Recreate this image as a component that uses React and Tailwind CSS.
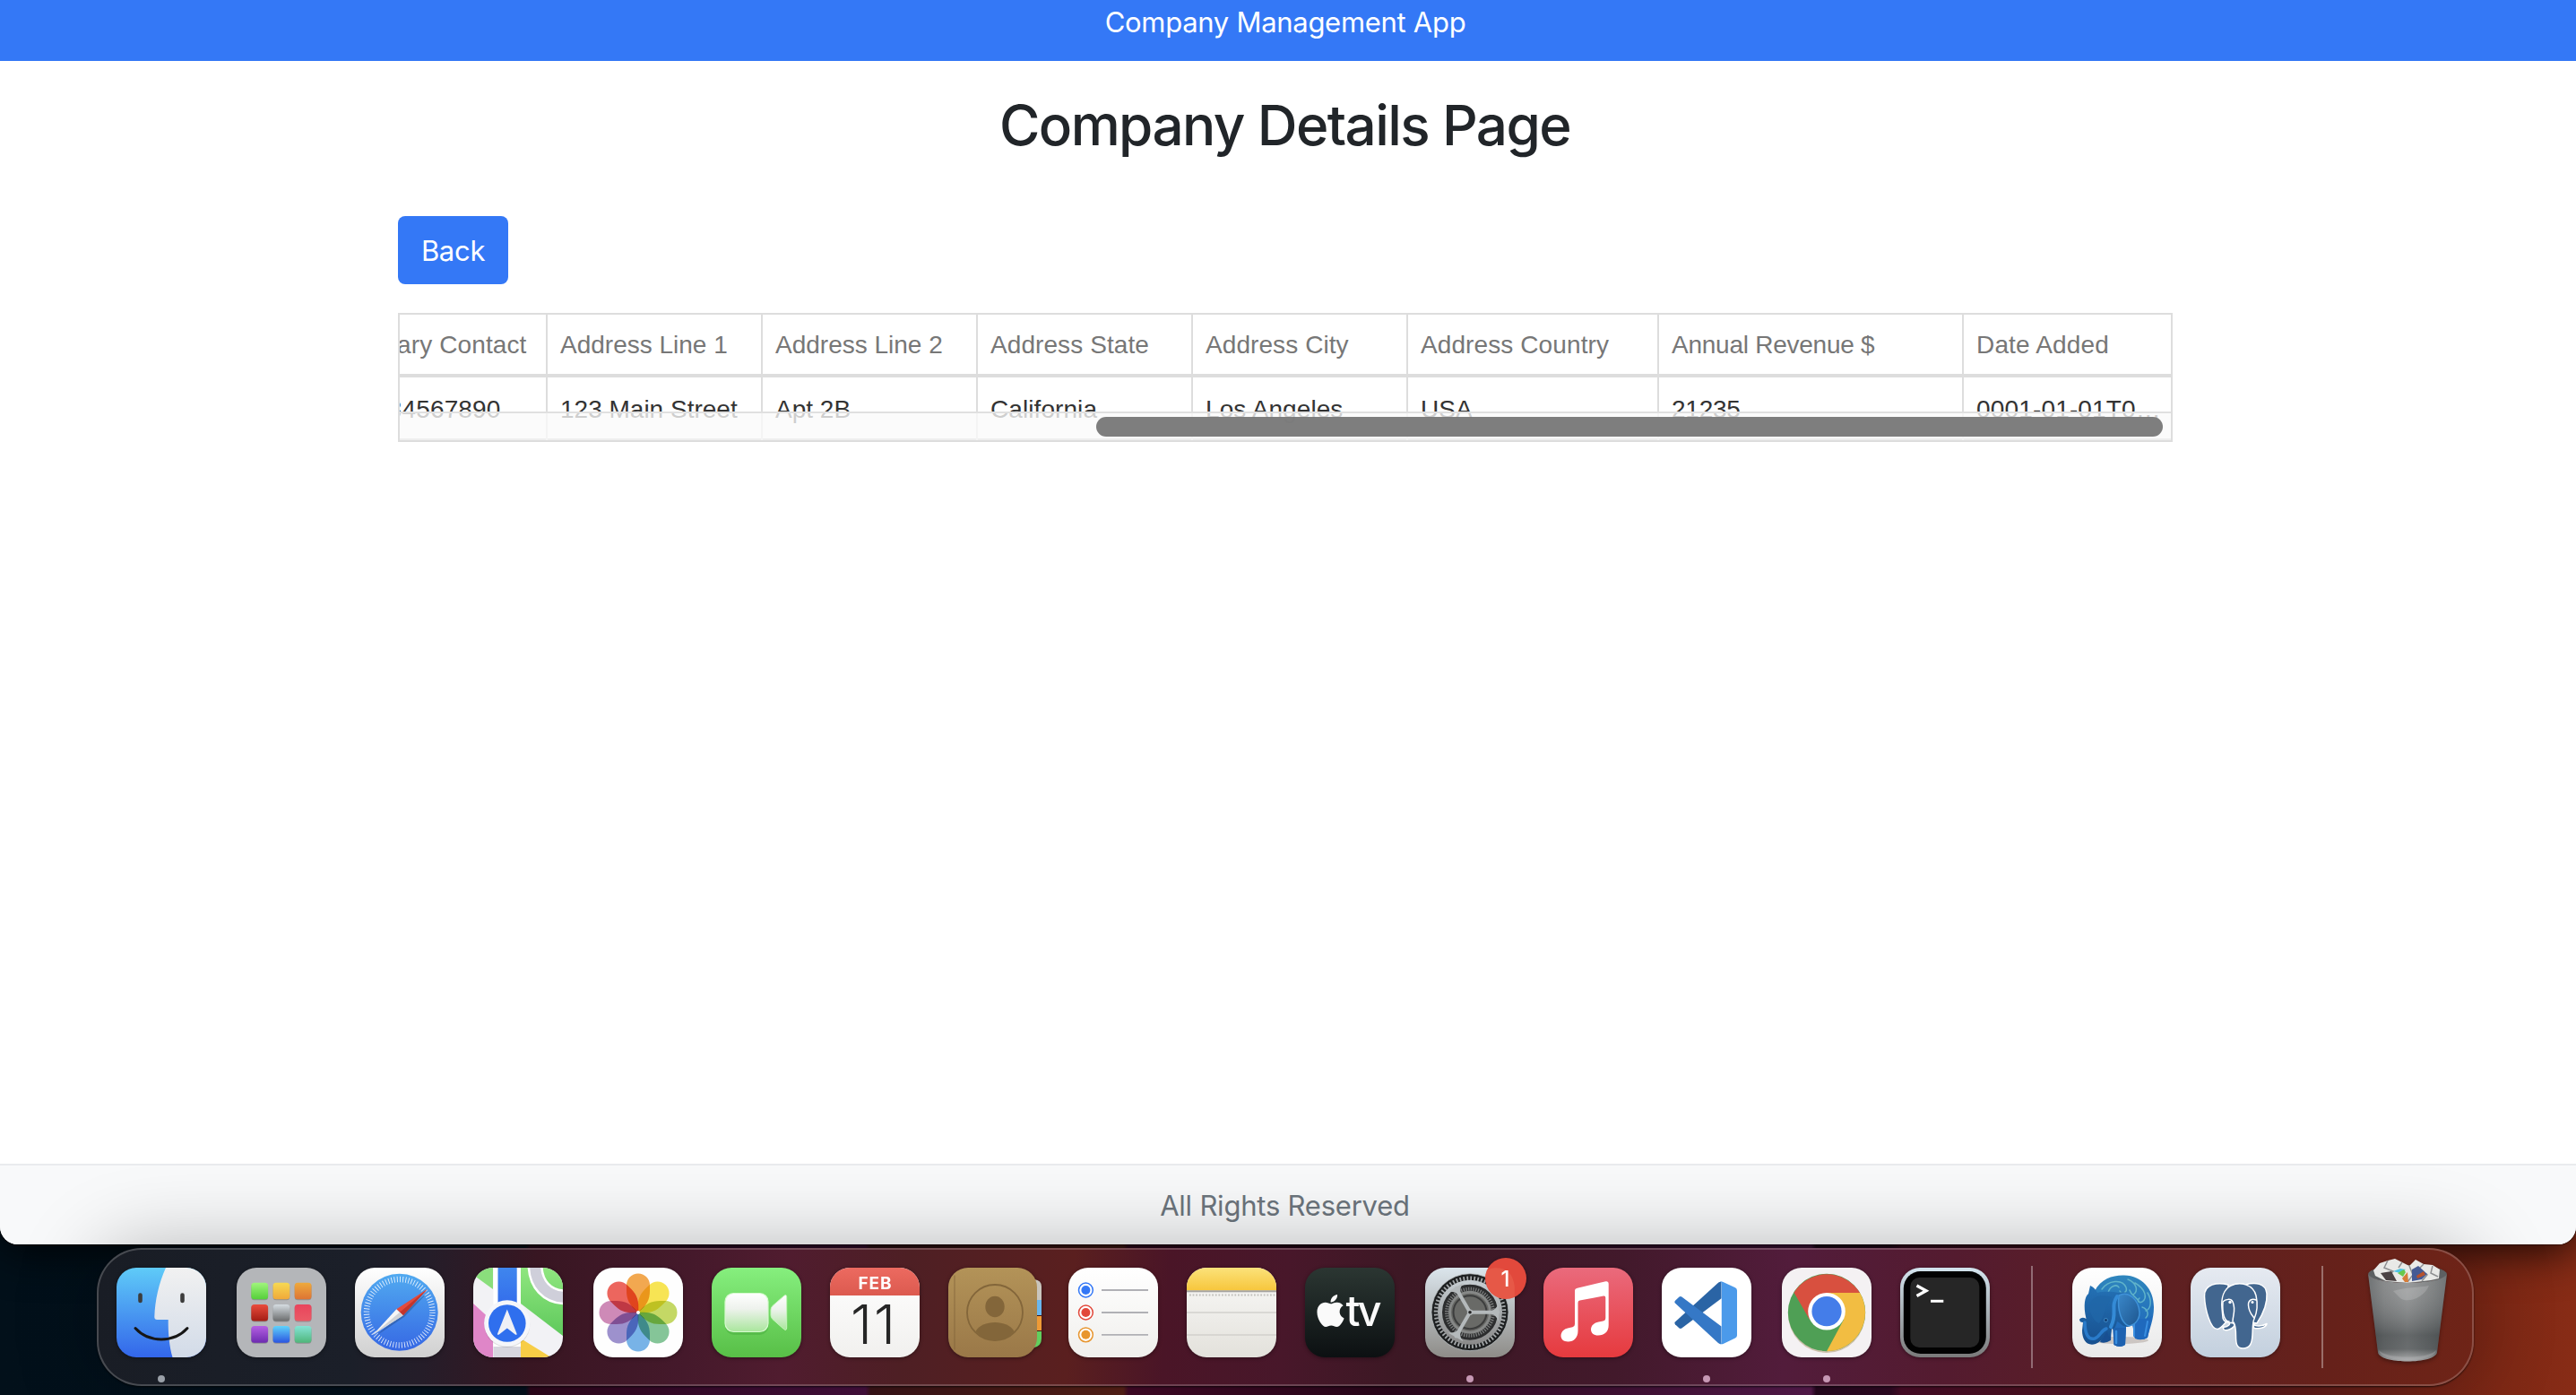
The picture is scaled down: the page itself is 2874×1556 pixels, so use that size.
import React from "react";
import { FaApple } from "react-icons/fa";

const columns = [
  { title: "Primary Contact", value: "+1234567890", width: "w-[240px]", spacing: "tracking-[0.12px]" },
  { title: "Address Line 1", value: "123 Main Street", width: "w-[240px]" },
  { title: "Address Line 2", value: "Apt 2B", width: "w-[240px]" },
  { title: "Address State", value: "California", width: "w-[240px]", spacing: "tracking-[0.08px]" },
  { title: "Address City", value: "Los Angeles", width: "w-[240px]", spacing: "tracking-[0.08px]" },
  { title: "Address Country", value: "USA", width: "w-[280px]", spacing: "tracking-[0.1px]" },
  { title: "Annual Revenue $", value: "21235", width: "w-[340px]", spacing: "tracking-[-0.25px]" },
  { title: "Date Added", value: "0001-01-01T0…", width: "w-[231px]", spacing: "tracking-[0.16px]", last: true },
];

function Cell({ col, children, className }) {
  return (
    <div
      className={`${col.width} shrink-0 whitespace-nowrap border-[#dddddd] pl-3.5 ${col.last ? "" : "border-r-2"} ${col.spacing ?? ""} ${className}`}
    >
      {children}
    </div>
  );
}

function DataTable() {
  return (
    <div className="relative mt-8 h-36 w-[1980px] overflow-hidden border-2 border-[#dddddd] font-['Liberation_Sans',sans-serif] text-[28px]">
      <div className="-ml-[75px] flex h-[70px] border-b-4 border-[#dddddd] text-[#777777]">
        {columns.map((c) => (
          <Cell key={c.title} col={c} className="leading-[68px]">{c.title}</Cell>
        ))}
      </div>
      <div className="-ml-[75px] flex h-[70px] text-[#333333]">
        {columns.map((c) => (
          <Cell key={c.title} col={c} className="leading-[71px] shadow-[inset_0_-2px_0_#c4c4c4]">{c.value}</Cell>
        ))}
      </div>
      <div className="absolute inset-x-0 bottom-0 h-8 border-t-2 border-[#e0e0e0] bg-[rgba(250,250,250,0.78)] bg-clip-padding pl-[777px] pt-1">
        <div className="h-[22px] w-[1190px] rounded-full bg-[rgba(118,118,118,0.94)]" />
      </div>
    </div>
  );
}

/* ---------- dock icons ---------- */

function Icon({ id, children }) {
  return (
    <svg viewBox="0 0 100 100" className="block h-[100px] w-[100px] overflow-visible drop-shadow-[0_1px_2px_rgba(0,0,0,0.4)]">
      <defs>
        <clipPath id={`${id}-tile`}>
          <rect width="100" height="100" rx="22" />
        </clipPath>
      </defs>
      {children}
    </svg>
  );
}

function Grad({ id, from, to, x2 = 0, y2 = 1 }) {
  return (
    <linearGradient id={id} x1="0" y1="0" x2={x2} y2={y2}>
      <stop offset="0" stopColor={from} />
      <stop offset="1" stopColor={to} />
    </linearGradient>
  );
}

function Finder() {
  return (
    <Icon id="finder">
      <Grad id="fi-b" from="#5fcbf8" to="#3366ea" />
      <Grad id="fi-w" from="#f1f1f1" to="#d2dbe8" />
      <g clipPath="url(#finder-tile)">
        <rect width="100" height="100" fill="url(#fi-b)" />
        <path d="M55 0C47 18 43 36 42.3 55q0 3 3 3h12.4C57.5 74 59 88 62.5 100H100V0z" fill="url(#fi-w)" />
      </g>
      <path d="M26.5 30.5v6.5M73.5 30.5v6.5" stroke="#3c3c3c" strokeWidth="4.6" strokeLinecap="round" />
      <path d="M21 67.5C36 84 64 84 79 67.5" fill="none" stroke="#161616" strokeWidth="3" strokeLinecap="round" />
    </Icon>
  );
}

const launchpadTiles = [
  ["#a0f57c", "#55cf3a"], ["#f6d952", "#f0a93a"], ["#eeaa3c", "#dd7434"],
  ["#ea4c3c", "#a31d14"], ["#d6dde2", "#6b6d6e"], ["#e9445c", "#ea5a66"],
  ["#b45fe2", "#6d2bb0"], ["#5fd2fb", "#2b55e0"], ["#85e3d6", "#4fb67a"],
];

function Launchpad() {
  return (
    <Icon id="launchpad">
      <rect width="100" height="100" rx="22" fill="#b4b6b9" />
      {launchpadTiles.map(([a, b], i) => (
        <g key={i}>
          <Grad id={`lp-${i}`} from={a} to={b} />
          <rect x={16.3 + (i % 3) * 24.2} y={17.5 + Math.floor(i / 3) * 24.2} width="18.8" height="18.8" rx="3.5" fill="#000" opacity="0.2" />
          <rect x={16.3 + (i % 3) * 24.2} y={16.7 + Math.floor(i / 3) * 24.2} width="18.8" height="18.6" rx="3.5" fill={`url(#lp-${i})`} />
        </g>
      ))}
    </Icon>
  );
}

function Safari() {
  return (
    <Icon id="safari">
      <Grad id="sa-t" from="#ffffff" to="#d0d0d0" />
      <Grad id="sa-c" from="#51aaf0" to="#3668e4" />
      <rect width="100" height="100" rx="22" fill="url(#sa-t)" />
      <circle cx="49.7" cy="49.7" r="43" fill="url(#sa-c)" />
      <circle cx="49.7" cy="49.7" r="36.7" fill="none" stroke="#fff" strokeOpacity="0.85" strokeWidth="6.5" strokeDasharray="0.9 2.303" />
      <path d="M22 77L55 55L83 26z" fill="#000" opacity="0.2" />
      <path d="M81 23.7L46.3 46.3L53.7 53.3z" fill="#e44a3c" />
      <path d="M81 23.7L50 49.8L53.7 53.3z" fill="#c2352c" />
      <path d="M20 75L46.3 46.3L53.7 53.3z" fill="#f6f6f6" />
      <path d="M20 75L50 49.8L53.7 53.3z" fill="#cfd2d6" />
    </Icon>
  );
}

function Maps() {
  return (
    <Icon id="maps">
      <Grad id="ma-g" from="#8fe67f" to="#5fc95c" />
      <Grad id="ma-b" from="#3f86ee" to="#2f62ea" />
      <g clipPath="url(#maps-tile)">
        <rect width="100" height="100" fill="#f2f2f5" />
        <path d="M0 0H22V24L0 8z" fill="#8ade7c" />
        <path d="M0 40L22 60V100H0z" fill="#df86c8" />
        <path d="M53 0H100V76L53 40z" fill="url(#ma-g)" />
        <path d="M53 79L87 100H53z" fill="#f7cd46" />
        <path d="M69-4C69 18 82 33 104 33" fill="none" stroke="#fff" strokeWidth="17" />
        <path d="M69-4C69 18 82 33 104 33" fill="none" stroke="#cfcfda" strokeWidth="12" />
        <path d="M22.5 0H53V100H22.5z" fill="#fff" />
        <path d="M22.5 88H53V100H22.5z" fill="#d6d6de" />
        <path d="M27.5 0H48.7V60H27.5z" fill="url(#ma-b)" />
      </g>
      <circle cx="37.8" cy="63.5" r="25.5" fill="#000" opacity="0.12" />
      <circle cx="37.8" cy="62" r="25.7" fill="#f5f6fa" />
      <circle cx="37.8" cy="62" r="20.8" fill="#2f6fee" />
      <path d="M37.8 46.5L48.5 73.5Q49 75.8 46.8 74.5L37.8 67.5L28.8 74.5Q26.6 75.8 27.1 73.5z" fill="#eef0f6" />
    </Icon>
  );
}

const petals = ["#f19c38", "#f6e13c", "#bcd350", "#74bd8a", "#65a9e4", "#8f82c6", "#c77aad", "#ea5148"];

function Photos() {
  return (
    <Icon id="photos">
      <rect width="100" height="100" rx="22" fill="#fefefe" />
      <g className="isolate">
        {petals.map((c, i) => (
          <path
            key={c}
            d="M50 50C40 42 37 35 37 26V19.5a13 13 0 0 1 26 0V26C63 35 60 42 50 50z"
            fill={c}
            opacity="0.88"
            className="mix-blend-multiply"
            transform={`rotate(${i * 45} 50 50)`}
          />
        ))}
      </g>
      <circle cx="50" cy="50" r="2" fill="#fff" />
    </Icon>
  );
}

function FaceTime() {
  return (
    <Icon id="facetime">
      <Grad id="ft-g" from="#86ef7e" to="#58bf47" />
      <linearGradient id="ft-w" x1="0" y1="0" x2="0" y2="1">
        <stop offset="0" stopColor="#ffffff" />
        <stop offset="0.4" stopColor="#eef2ed" />
        <stop offset="1" stopColor="#a9e69c" />
      </linearGradient>
      <rect width="100" height="100" rx="22" fill="url(#ft-g)" />
      <rect x="15" y="30" width="48.5" height="45" rx="10" fill="#2f8f2a" opacity="0.25" />
      <rect x="15" y="28.5" width="48" height="43" rx="9.5" fill="url(#ft-w)" stroke="#d8fbd0" strokeWidth="1.2" />
      <path d="M66 47Q66 44.5 68 42.5L80.5 31.5Q83.7 29 83.7 33V67Q83.7 71 80.5 68.5L68 57.5Q66 55.5 66 53z" fill="url(#ft-w)" stroke="#c5f5bb" strokeWidth="1" />
    </Icon>
  );
}

function Calendar() {
  return (
    <Icon id="calendar">
      <Grad id="ca-w" from="#ffffff" to="#f1f0ee" />
      <Grad id="ca-r" from="#ec6a60" to="#dc5a4f" />
      <g clipPath="url(#calendar-tile)">
        <rect width="100" height="100" fill="url(#ca-w)" />
        <rect width="100" height="31" fill="url(#ca-r)" />
      </g>
      <text x="50" y="24" textAnchor="middle" textLength="37" className="fill-white font-['Inter',sans-serif] text-[19px] font-bold">FEB</text>
      <text x="48" y="84.5" textAnchor="middle" textLength="50" className="fill-[#262626] font-['Inter',sans-serif] text-[61px] font-light">11</text>
    </Icon>
  );
}

function Contacts() {
  return (
    <Icon id="contacts">
      <Grad id="co-b" from="#b39358" to="#9a7848" />
      <path d="M96 13q8 1 8 8v15H96z" fill="#c9c5bd" />
      <path d="M96 36h8v17H96z" fill="#69b7ee" />
      <path d="M96 54h8v16H96z" fill="#ef9a35" />
      <path d="M96 71h8v8q0 8-8 10z" fill="#62cf5e" />
      <rect width="99" height="100" rx="22" fill="url(#co-b)" />
      <path d="M7 8.5V91.5" stroke="#7d6038" strokeWidth="1.2" opacity="0.6" />
      <circle cx="52" cy="50" r="31" fill="none" stroke="#83663a" strokeWidth="1.8" />
      <ellipse cx="52" cy="43.5" rx="10.7" ry="11.8" fill="#83663a" />
      <path d="M30.5 71C37 57.5 67 57.5 73.5 71C62 84.5 42 84.5 30.5 71z" fill="#83663a" />
    </Icon>
  );
}

function Reminders() {
  return (
    <Icon id="reminders">
      <Grad id="re-w" from="#ffffff" to="#f0efec" />
      <rect width="100" height="100" rx="22" fill="url(#re-w)" />
      {[["#3478f6", 25], ["#e2483b", 50], ["#e8962f", 74.8]].map(([c, y]) => (
        <g key={c}>
          <circle cx="19.4" cy={y} r="7.9" fill="#fff" stroke={c} strokeWidth="1.5" />
          <circle cx="19.4" cy={y} r="5" fill={c} />
          <path d={`M37 ${y}H89`} stroke="#b0b0b5" strokeWidth="1.8" />
        </g>
      ))}
    </Icon>
  );
}

function Notes() {
  return (
    <Icon id="notes">
      <Grad id="no-w" from="#fafaf9" to="#e3e1db" />
      <Grad id="no-y" from="#fbe27a" to="#f7c63c" />
      <g clipPath="url(#notes-tile)">
        <rect width="100" height="100" fill="url(#no-w)" />
        <rect width="100" height="25.5" fill="url(#no-y)" />
        <rect y="25.3" width="100" height="2" fill="#a5a3a0" />
        <path d="M3 30.5H100" stroke="#c2c0bc" strokeWidth="1.8" strokeDasharray="1.8 1.8" />
        <path d="M0 50H100M0 75H100" stroke="#d2d1cd" strokeWidth="1.6" />
      </g>
    </Icon>
  );
}

function AppleTv() {
  return (
    <Icon id="tv">
      <Grad id="tv-g" from="#2b3632" to="#0c1012" />
      <rect width="100" height="100" rx="22" fill="url(#tv-g)" />
      <FaApple x="8" y="27.5" size={41} color="#fafafa" />
      <text x="45.5" y="65.2" textLength="40" className="fill-[#fafafa] font-['Inter',sans-serif] text-[47px] font-medium">tv</text>
    </Icon>
  );
}

function Settings() {
  return (
    <Icon id="settings">
      <Grad id="se-t" from="#dbe5ec" to="#8e8c88" />
      <Grad id="se-r" from="#c5ccd0" to="#8c8c8c" />
      <rect width="100" height="100" rx="22" fill="url(#se-t)" />
      <circle cx="50" cy="49.7" r="43" fill="#1d1f20" stroke="#b8bdbf" strokeWidth="0.8" />
      <circle cx="50" cy="49.7" r="38" fill="none" stroke="#a3a7a9" strokeWidth="4.5" strokeDasharray="1.8 2.18" />
      <circle cx="50" cy="49.7" r="33.5" fill="#2c2d2e" stroke="url(#se-r)" strokeWidth="5" />
      <circle cx="50" cy="49.7" r="26" fill="none" stroke="#7a7c7c" strokeWidth="4" strokeDasharray="1.3 1.422" />
      <circle cx="50" cy="49.7" r="22.5" fill="#666764" stroke="#868887" strokeWidth="3" />
      <circle cx="50" cy="49.7" r="18.5" fill="#696a67" stroke="#3c3d3d" strokeWidth="2" />
      <path d="M50 49.7H81M50 49.7L34.5 22.9M50 49.7L34.5 76.5" stroke="#b4b9bb" strokeWidth="4" strokeLinecap="round" />
      <g fill="#b4b9bb">
        {[0, 120, 240].map((a) => (
          <path key={a} d="M74 47.7Q79 47 82 40V60Q79 52.5 74 51.7z" transform={`rotate(${a} 50 49.7)`} />
        ))}
      </g>
      <circle cx="50" cy="49.7" r="3.2" fill="#b4b9bb" />
      <circle cx="50" cy="49.7" r="1.8" fill="#222" />
      <circle cx="90" cy="12" r="23" fill="#e2493c" />
      <path d="M67.3 8.5Q68 0.5 78 0.3Q98 0 99.9 22V32.5Q93 36 85 34.5Q68 30 67.3 8.5z" fill="#ea6a55" opacity="0.45" />
      <text x="89.5" y="20.7" textAnchor="middle" className="fill-white font-['Inter',sans-serif] text-[24px] font-medium">1</text>
    </Icon>
  );
}

function Music() {
  return (
    <Icon id="music">
      <Grad id="mu-r" from="#ea6a7c" to="#e63a3e" />
      <rect width="100" height="100" rx="22" fill="url(#mu-r)" />
      <path d="M35 26Q35 23.3 37.8 22.7L69.5 15.3Q72.7 14.7 72.7 17.7V64C72.7 71.5 68 75.5 61 75.5C56 75.5 53 72.8 53 69C53 64.5 56.5 61.5 61.5 60.5L66.5 59.5Q69.3 59 69.3 56V33.5Q69.3 31 67 31.5L40.5 36.6Q38.5 37 38.5 39V70.5C38.5 78 34 82.5 27.5 82.5C22.5 82.5 19.5 79.7 19.5 76C19.5 71.5 23 68 28 67.2L32.5 66.3Q35 65.7 35 63z" fill="#fff" />
    </Icon>
  );
}

function VsCode() {
  return (
    <Icon id="vscode">
      <rect width="100" height="100" rx="22" fill="#fff" />
      <path d="M14.6 60.7Q13.8 62 15 63.2L19.5 67.6Q21 68.5 22.3 67.6L66.5 34.3V15.8Q64.8 15.3 63.3 16.6z" fill="#2a64a5" />
      <path d="M14.6 39.3Q13.8 38 15 36.8L19.5 32.4Q21 31.5 22.3 32.4L66.5 65.5V85Q64.5 85.5 63 84z" fill="#3578c6" />
      <path d="M66.5 15.5Q67.5 15.3 68.5 15.9L82 22.3Q84 23.3 84 25.5V75.5Q84 77.5 82 78.5L68.5 84.9Q67.5 85.5 65 85Q66.8 84.5 66.8 82.5V18.5Q66.8 16 65 15.6z" fill="#4b9aea" />
    </Icon>
  );
}

function Chrome() {
  return (
    <Icon id="chrome">
      <rect width="100" height="100" rx="22" fill="#f4f1f3" />
      <circle cx="50" cy="52" r="43" fill="#8a6a2a" opacity="0.35" />
      <circle cx="50" cy="50" r="43.2" fill="#4f9f55" />
      <path d="M50 28H87A43.2 43.2 0 0 1 50 93.2L69 58z" fill="#f2bd42" />
      <path d="M13.5 27.7A43.2 43.2 0 0 1 87 28H50L31 58z" fill="#d8503f" />
      <circle cx="50" cy="48.7" r="20.8" fill="#fff" />
      <circle cx="50" cy="48.7" r="16.6" fill="#447de9" />
    </Icon>
  );
}

function Terminal() {
  return (
    <Icon id="terminal">
      <Grad id="te-s" from="#d3e4ee" to="#7a7a7a" />
      <rect width="100" height="100" rx="22" fill="url(#te-s)" />
      <rect x="3.8" y="4" width="92" height="92" rx="19" fill="#020202" />
      <rect x="11.3" y="11" width="77" height="78" rx="10" fill="#262626" />
      <path d="M18.5 20L29 25.7L18.5 31.5" fill="none" stroke="#fff" strokeWidth="3.3" />
      <path d="M34 37.3H48.3" stroke="#fff" strokeWidth="3" />
    </Icon>
  );
}

function BlueElephant() {
  return (
    <Icon id="elephant">
      <Grad id="el-w" from="#ffffff" to="#e9e9e9" />
      <Grad id="el-b" from="#2f86bd" to="#1c62bb" />
      <Grad id="el-h" from="#2471b5" to="#17508f" />
      <Grad id="el-e" from="#3a87c9" to="#1d568f" x2="1" />
      <rect width="100" height="100" rx="22" fill="url(#el-w)" />
      <ellipse cx="52" cy="81" rx="33" ry="4" fill="#bdb5b0" opacity="0.7" />
      <path d="M25 26C32 12 46 8 58 8.5C78 9 91 24 91 44C91 58 86 68 84 78Q77 82 69.5 78L67 62L60 66L59 86Q53 90 46.5 86L45 66L38 60z" fill="url(#el-b)" />
      <path d="M66 55L70 79Q77 82 84 78L89 54C84 58 74 58 66 55z" fill="#1f69bd" />
      <path d="M69 60V76M84 60L81 76" fill="none" stroke="#3a8fe0" strokeWidth="2" strokeLinecap="round" />
      <g fill="none" stroke="#72c4cf" strokeWidth="1.5" opacity="0.75" strokeLinecap="round">
        <path d="M33 24C40 14 56 12 60 22C62 28 55 30 53 26M40 28C42 20 50 18 52 22M62 13C72 17 74 26 68 30M70 17C82 24 84 34 78 38C74 40 72 36 75 34M84 28C89 36 88 46 82 48M78 44C84 46 86 52 82 56M64 25C66 32 72 32 74 38" />
      </g>
      <path d="M38 66H44L43 81Q37 85 31 83z" fill="#184f92" />
      <path d="M20 20Q25 22 28 28C36 26 46 27 52 28C62 24 74 36 75 50C75 58 70 64 62 66C56 66 54 62 50 60C48 68 46 70 44 68L42 78Q40 76 39 71C36 73 35 82 26 85C16 88 11 80 11 70L12 61Q8 61 8 57.5Q11 54.5 15.5 57C12 42 14 32 18 29z" fill="url(#el-h)" />
      <path d="M20 40C24 30 34 30 44 33C36 44 36 54 30 62C24 60 18 50 20 40z" fill="#2066a8" opacity="0.8" />
      <path d="M52 31C63 25 74 36 75 50C75 58 70 64 63 65C55 62 50 48 52 31z" fill="url(#el-e)" stroke="#3f92d8" strokeWidth="1.5" />
      <path d="M50 32C42 44 51 50 43 66" fill="none" stroke="#348bd6" strokeWidth="4" strokeLinecap="round" />
      <path d="M14 61C14 74 18 81 25 79C31 77 32 70 38 68" fill="none" stroke="#2a7bca" strokeWidth="3.5" strokeLinecap="round" />
      <circle cx="37.5" cy="58.5" r="2" fill="#123c70" stroke="#4a9ad6" strokeWidth="0.8" />
      <path d="M46.5 67H60L59 86Q53 90 46.5 86z" fill="#1e62b0" />
      <path d="M49 71V84" stroke="#3a8fe0" strokeWidth="2.5" strokeLinecap="round" />
    </Icon>
  );
}

function Postgres() {
  return (
    <Icon id="postgres">
      <Grad id="pg-t" from="#e6eaf1" to="#c3d0de" />
      <rect width="100" height="100" rx="22" fill="url(#pg-t)" />
      <g fill="#42668f" stroke="#fff" strokeWidth="1.5" strokeLinejoin="round" strokeLinecap="round">
        <path d="M61 19C72 16 84 17 85 29C86 42 78 56 74 62L60 60z" />
        <path d="M42 19C30 16 15 18 15.5 32C16 46 22 69 30 68.5C34 68 38 62 41 59z" />
        <path d="M36 66C42 67 45 62 43 61.5C46 61 49 62 49 64C48 68 40 71 37 69z" />
        <path d="M69 62C72 66 79 66 85 62.5C84 67 77 68.5 71 67.5z" />
        <path d="M35 45C34 34 37 24 45 20C56 15 70 19 73 31C75 40 74 50 71 57C69 61 69.5 67 69 75C68.5 85 66 90 58.5 90C51 90 50.5 84 50.5 76C50.5 69 50 64 48 61C44 62 37 61 36 56z" />
        <path d="M36 38C39 35 45 34 47 38C51 47 47 53 47 60M73 36C69 34 64 36 64.5 42C65 50 68 52 71 56M43 60C38 60 35 52 36 38" fill="none" />
      </g>
      <circle cx="44" cy="38.5" r="1.7" fill="#fff" />
      <circle cx="69" cy="38.5" r="1.5" fill="#fff" />
    </Icon>
  );
}

function Trash() {
  return (
    <svg viewBox="0 0 88 115" className="block h-[115px] w-[88px] overflow-visible drop-shadow-[0_2px_2px_rgba(0,0,0,0.35)]">
      <linearGradient id="tr-b" x1="0" x2="1" y1="0" y2="0">
        <stop offset="0" stopColor="#5a5e60" />
        <stop offset="0.2" stopColor="#77797a" />
        <stop offset="0.5" stopColor="#8b8d8e" />
        <stop offset="0.82" stopColor="#707374" />
        <stop offset="1" stopColor="#5c6062" />
      </linearGradient>
      <linearGradient id="tr-s" x1="0" x2="0" y1="0" y2="1">
        <stop offset="0" stopColor="#fff" stopOpacity="0.12" />
        <stop offset="0.7" stopColor="#2c3234" stopOpacity="0.4" />
        <stop offset="0.86" stopColor="#2c3234" stopOpacity="0.35" />
        <stop offset="1" stopColor="#fff" stopOpacity="0.25" />
      </linearGradient>
      <ellipse cx="44" cy="17" rx="44" ry="10" fill="#5d6062" />
      <path d="M6 13L13 5L22 2L30 0L38 4L46 8L53 1L62 6L72 7L80 12L79 22L70 24L44 27L20 25L8 19z" fill="#e9e9e7" />
      <path d="M22 2L18 10L28 14L20 22M38 4L34 10M46 8L50 18L44 26M62 6L56 12L66 18L60 25M72 8L70 16L78 20" fill="none" stroke="#8f9092" strokeWidth="1.5" />
      <path d="M14 16L26 14L32 25L20 24z" fill="#4a4244" />
      <path d="M28 14L36 11L42 12L36 16z" fill="#4cc3e6" />
      <path d="M33 16L40 12L42 15L39 20z" fill="#69c94d" />
      <path d="M38 22L44 15L45 26L41 26z" fill="#d67d39" />
      <path d="M49 12L56 8L66 17L60 23L49 25z" fill="#455a94" />
      <path d="M54 19L62 14L64 18L55 22z" fill="#b5512d" />
      <path d="M0 17C6 30 82 30 88 17L77 104C76 118 12 118 11 104z" fill="url(#tr-b)" />
      <path d="M0 17C6 30 82 30 88 17L77 104C76 118 12 118 11 104z" fill="url(#tr-s)" />
      <path d="M28 36C40 32 58 32 68 30C62 44 44 50 36 44z" fill="#fff" opacity="0.16" />
      <path d="M12 102C20 112 68 112 76 102C74 117 14 117 12 102z" fill="#c7c9ca" opacity="0.25" />
    </svg>
  );
}

const apps = [
  { App: Finder, gap: "", running: true },
  { App: Launchpad, gap: "ml-[34px]" },
  { App: Safari, gap: "ml-8" },
  { App: Maps, gap: "ml-8" },
  { App: Photos, gap: "ml-[34px]" },
  { App: FaceTime, gap: "ml-8" },
  { App: Calendar, gap: "ml-8" },
  { App: Contacts, gap: "ml-8" },
  { App: Reminders, gap: "ml-[34px]" },
  { App: Notes, gap: "ml-8" },
  { App: AppleTv, gap: "ml-8" },
  { App: Settings, gap: "ml-[34px]", running: true },
  { App: Music, gap: "ml-8" },
  { App: VsCode, gap: "ml-8", running: true },
  { App: Chrome, gap: "ml-[34px]", running: true },
  { App: Terminal, gap: "ml-8" },
];

function Divider() {
  return <div className="-mt-0.5 ml-[46px] h-[114px] w-0.5 shrink-0 bg-white/35" />;
}

function Dock() {
  return (
    <div className="relative z-10 ml-[108px] mt-1 flex h-[154px] w-[2652px] items-start rounded-[50px] border-2 border-white/20 bg-[linear-gradient(94deg,#191d25_0%,#1b1f29_11%,#251d29_14%,#381622_18.5%,#45192b_25%,#501c2f_29%,#4e1f24_34%,#5a1f1f_41%,#4a1527_45%,#48172a_50%,#3c1824_55%,#42192b_64%,#521c3b_71%,#541b2f_78%,#5e2022_87%,#66211a_94%,#6f2417_100%)] bg-origin-border pl-5 pt-5 shadow-[0_0_90px_rgba(0,0,0,0.28),0_1px_2px_rgba(0,0,0,0.7)]">
      {apps.map(({ App, gap, running }, i) => (
        <div key={i} className={`flex shrink-0 flex-col items-center ${gap}`}>
          <App />
          {running && <div className={`mt-5 size-2 rounded-full ${i === 0 ? "bg-[#9aa0a8]" : "bg-[#c698b4]"}`} />}
        </div>
      ))}
      <Divider />
      <div className="ml-11 shrink-0"><BlueElephant /></div>
      <div className="ml-8 shrink-0"><Postgres /></div>
      <Divider />
      <div className="-mt-2.5 ml-[50px] shrink-0"><Trash /></div>
    </div>
  );
}

export default function App() {
  return (
    <div className="h-[1556px] w-[2874px] overflow-hidden bg-[linear-gradient(90deg,#02101a_0%,#03111e_20.4%,#2e061c_20.6%,#481040_33.6%,#3c1418_33.8%,#5a2218_43.6%,#440a28_43.8%,#2c061c_54%,#5a1c50_70.3%,#280820_70.5%,#300a24_73.4%,#4a0c28_73.8%,#54161a_86%,#7e2815_97%,#882c16_100%)]">
      <div className="relative flex h-[1388px] flex-col overflow-hidden rounded-b-[20px] bg-white font-['Inter',sans-serif] shadow-[0_6px_50px_rgba(0,0,0,0.85),0_0_2px_#000]">
        <header className="h-[68px] shrink-0 bg-[#3478f6] pr-1.5 pt-px text-center text-[31px] leading-[48px] tracking-[-0.29px] text-white">
          Company Management App
        </header>
        <main className="flex-1 pr-1.5">
          <h1 className="mt-[33px] pr-px text-center text-[62px] font-medium leading-[77px] tracking-[-1.6px] text-[#212529]">
            Company Details Page
          </h1>
          <div className="ml-[444px] mt-[63px]">
            <button className="block h-[76px] w-[123px] rounded-lg bg-[#3478f6] text-[31px] leading-[77px] tracking-[-0.3px] text-white">
              Back
            </button>
            <DataTable />
          </div>
        </main>
        <footer className="h-[90px] shrink-0 border-t-2 border-[#e9ebee] bg-[#f8f9fa] pr-[7px] text-center text-[31px] leading-[89px] tracking-[-0.22px] text-[#6c757d]">
          All Rights Reserved
        </footer>
      </div>
      <Dock />
    </div>
  );
}
